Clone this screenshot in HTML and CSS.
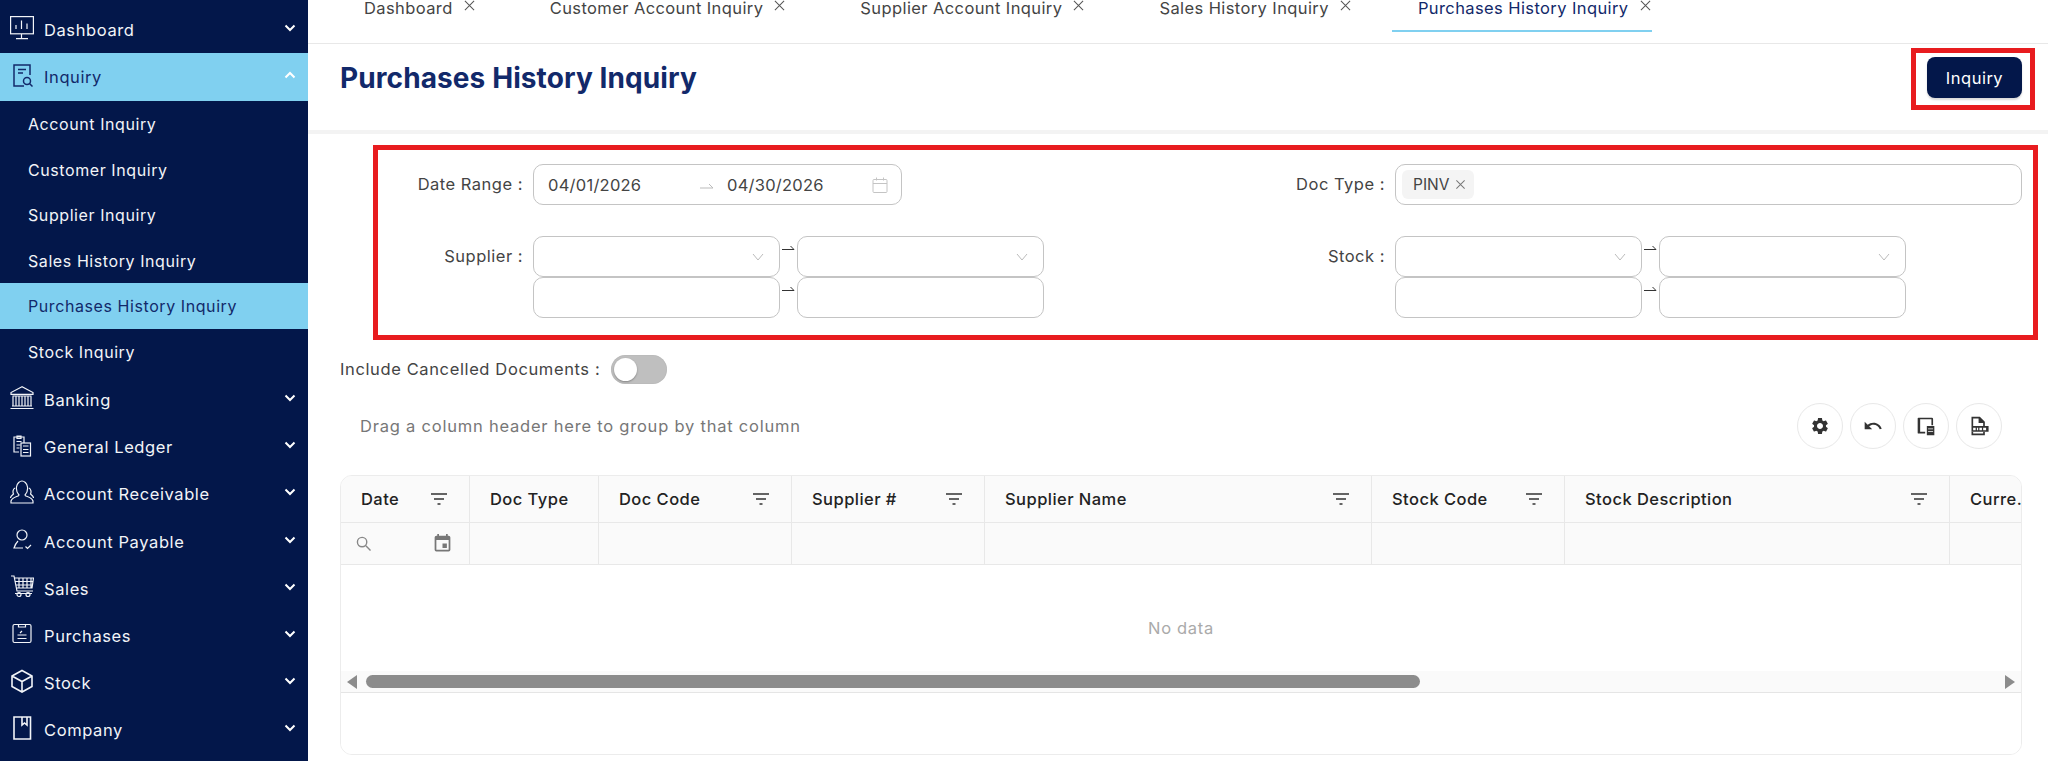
FILE: index.html
```html
<!DOCTYPE html>
<html lang="en">
<head>
<meta charset="utf-8">
<title>Purchases History Inquiry</title>
<link rel="stylesheet" href="styles.css">
</head>
<body>
<div class="app">
  <aside class="sidebar">
    <div class="nav-item top-item">
      <svg class="nav-icon" viewBox="0 0 24 24"><rect x="0.6" y="0.6" width="22.8" height="17.2"/><path d="M6 13V9M11.5 13V4.5M17 13V7.5M11.5 18v4M6 22.6h12"/></svg>
      <span>Dashboard</span>
      <svg class="chev" viewBox="0 0 12 8"><path d="M1.5 1.5 6 6l4.5-4.5"/></svg>
    </div>
    <div class="nav-item active">
      <svg class="nav-icon" viewBox="0 0 24 24"><path d="M20 12V2H4v21h10M8 6.5h8M8 10h5"/><circle cx="17" cy="18" r="3.5"/><path d="m19.500 20.500 3 3"/></svg>
      <span>Inquiry</span>
      <svg class="chev" viewBox="0 0 12 8"><path d="M1.500 6.500 6 2l4.500 4.500"/></svg>
    </div>
    <div class="sub-item">Account Inquiry</div>
    <div class="sub-item">Customer Inquiry</div>
    <div class="sub-item">Supplier Inquiry</div>
    <div class="sub-item">Sales History Inquiry</div>
    <div class="sub-item active">Purchases History Inquiry</div>
    <div class="sub-item">Stock Inquiry</div>
    <div class="nav-item first-after">
      <svg class="nav-icon" viewBox="0 0 24 24"><path d="M12 .8 1 6.500v1.800h22V6.500zM2.500 10h19M3 10.500v9M6 10.500v9M9 10.500v9M12 10.500v9M15 10.500v9M18 10.500v9M21 10.500v9M2 20h20M.5 22.500h23"/></svg>
      <span>Banking</span>
      <svg class="chev" viewBox="0 0 12 8"><path d="M1.500 1.500 6 6l4.500-4.500"/></svg>
    </div>
    <div class="nav-item">
      <svg class="nav-icon" viewBox="0 0 24 24"><path d="M9 19H4V4h10v6M7 3h4v2.500H7zM6.500 8.500h5M6.500 12h4M6.500 15h3"/><rect x="11" y="10" width="9.500" height="13"/><path d="M13 13h5.500M13 16.500h5.500M13 19.500h5.500"/></svg>
      <span>General Ledger</span>
      <svg class="chev" viewBox="0 0 12 8"><path d="M1.500 1.500 6 6l4.500-4.500"/></svg>
    </div>
    <div class="nav-item">
      <svg class="nav-icon" viewBox="0 0 24 24"><path d="M9 15c-2-2-3-4-2.500-8C7 3 10 1 12 1s5 2 5.500 6c.5 4-.5 6-2.500 8 0 2 6 1 8 6v2H1v-2c2-5 8-4 8-6zM5 8C3 9 2.500 12 3.500 14c-1 1-3 2-3 4M19 8c2 1 2.500 4 1.500 6 1 1 3 2 3 4"/></svg>
      <span>Account Receivable</span>
      <svg class="chev" viewBox="0 0 12 8"><path d="M1.500 1.500 6 6l4.500-4.500"/></svg>
    </div>
    <div class="nav-item">
      <svg class="nav-icon" viewBox="0 0 24 24"><circle cx="12" cy="8" r="5"/><path d="M8 14c-2 2-3 4-4 7h9M15.500 19.500l2 2 3.500-3.500"/></svg>
      <span>Account Payable</span>
      <svg class="chev" viewBox="0 0 12 8"><path d="M1.500 1.500 6 6l4.500-4.500"/></svg>
    </div>
    <div class="nav-item">
      <svg class="nav-icon" viewBox="0 0 24 24"><path d="M1 2h3l3 15h16M4.500 4H23.500L22 14H6.500M9 4v10M13 4v10M17 4v10M21 4v10M5.500 7.500h17.500M6 11h16.500M5 19.500h17"/><circle cx="9" cy="20.500" r="2"/><circle cx="18" cy="20.500" r="2"/></svg>
      <span>Sales</span>
      <svg class="chev" viewBox="0 0 12 8"><path d="M1.500 1.500 6 6l4.500-4.500"/></svg>
    </div>
    <div class="nav-item">
      <svg class="nav-icon" viewBox="0 0 24 24"><rect x="3" y="2.500" width="18" height="18" rx="1.500"/><path d="M8.500 2.500v2.500h7V2.500M7.500 16.500h9M7.500 13h9M10 11l2-2"/></svg>
      <span>Purchases</span>
      <svg class="chev" viewBox="0 0 12 8"><path d="M1.500 1.500 6 6l4.500-4.500"/></svg>
    </div>
    <div class="nav-item">
      <svg class="nav-icon thick" viewBox="0 0 24 24"><path d="M12 1.500 22 7v10.500L12 23 2 17.500V7zM2 7l10 5.500L22 7M12 12.500V23"/></svg>
      <span>Stock</span>
      <svg class="chev" viewBox="0 0 12 8"><path d="M1.500 1.500 6 6l4.500-4.500"/></svg>
    </div>
    <div class="nav-item">
      <svg class="nav-icon thick" viewBox="0 0 24 24"><path d="M4 1h16.500v22H4zM12 1v8l2.500-2 2.500 2V1"/></svg>
      <span>Company</span>
      <svg class="chev" viewBox="0 0 12 8"><path d="M1.500 1.500 6 6l4.500-4.500"/></svg>
    </div>
  </aside>

  <main class="main">
    <nav class="tabs">
      <div class="tab"><span>Dashboard</span><svg class="close" viewBox="0 0 12 12"><path d="m1 1 10 10M11 1 1 11"/></svg></div>
      <div class="tab"><span>Customer Account Inquiry</span><svg class="close" viewBox="0 0 12 12"><path d="m1 1 10 10M11 1 1 11"/></svg></div>
      <div class="tab"><span>Supplier Account Inquiry</span><svg class="close" viewBox="0 0 12 12"><path d="m1 1 10 10M11 1 1 11"/></svg></div>
      <div class="tab"><span>Sales History Inquiry</span><svg class="close" viewBox="0 0 12 12"><path d="m1 1 10 10M11 1 1 11"/></svg></div>
      <div class="tab active"><span>Purchases History Inquiry</span><svg class="close" viewBox="0 0 12 12"><path d="m1 1 10 10M11 1 1 11"/></svg></div>
    </nav>

    <header class="page-head">
      <h1 class="page-title">Purchases History Inquiry</h1>
      <div class="marked-action"><button class="primary-btn" type="button">Inquiry</button></div>
    </header>

    <section class="filters">
      <label class="f-label">Date Range :</label>
      <div class="field date-field">
        <span class="date-val">04/01/2026</span>
        <svg class="date-arrow" viewBox="0 0 14 6"><path d="M0 5h13L9 1"/></svg>
        <span class="date-val">04/30/2026</span>
        <svg class="cal" viewBox="0 0 16 16"><rect x="1" y="2.500" width="14" height="13" rx="1"/><path d="M1 6.500h14M4.500 .5v3M11.500 .5v3"/></svg>
      </div>
      <label class="f-label">Doc Type :</label>
      <div class="field tag-field">
        <span class="tag">PINV<svg class="tag-x" viewBox="0 0 12 12"><path d="m1.500 1.500 9 9M10.500 1.500l-9 9"/></svg></span>
      </div>

      <label class="f-label range-label">Supplier :</label>
      <div class="range">
        <div class="field select"><svg class="sel-chev" viewBox="0 0 12 8"><path d="M1 1l5 6 5-6"/></svg></div>
        <svg class="range-arrow" viewBox="0 0 13 6"><path d="M0 4.500h12L8.500 1"/></svg>
        <div class="field select"><svg class="sel-chev" viewBox="0 0 12 8"><path d="M1 1l5 6 5-6"/></svg></div>
        <div class="field"></div>
        <svg class="range-arrow" viewBox="0 0 13 6"><path d="M0 4.500h12L8.500 1"/></svg>
        <div class="field"></div>
      </div>
      <label class="f-label range-label">Stock :</label>
      <div class="range">
        <div class="field select"><svg class="sel-chev" viewBox="0 0 12 8"><path d="M1 1l5 6 5-6"/></svg></div>
        <svg class="range-arrow" viewBox="0 0 13 6"><path d="M0 4.500h12L8.500 1"/></svg>
        <div class="field select"><svg class="sel-chev" viewBox="0 0 12 8"><path d="M1 1l5 6 5-6"/></svg></div>
        <div class="field"></div>
        <svg class="range-arrow" viewBox="0 0 13 6"><path d="M0 4.500h12L8.500 1"/></svg>
        <div class="field"></div>
      </div>
    </section>

    <div class="include-row">
      <span class="include-label">Include Cancelled Documents :</span>
      <span class="switch"><span class="knob"></span></span>
    </div>

    <div class="toolbar">
      <span class="group-hint">Drag a column header here to group by that column</span>
      <div class="tool-btns">
        <button class="tool-btn" type="button" aria-label="Settings"><svg viewBox="0 0 24 24"><path d="M19.140 12.940c.04-.3.06-.61.06-.94 0-.32-.02-.64-.07-.94l2.030-1.580c.18-.14.23-.41.12-.61l-1.920-3.320c-.12-.22-.37-.29-.59-.22l-2.390.96c-.5-.38-1.030-.7-1.620-.94l-.36-2.540c-.04-.24-.24-.41-.48-.41h-3.840c-.24 0-.43.17-.47.41l-.36 2.540c-.59.24-1.130.57-1.620.94l-2.390-.96c-.22-.08-.47 0-.59.22L2.740 8.870c-.12.21-.08.47.12.61l2.030 1.580c-.05.3-.09.63-.09.94s.02.64.07.94l-2.030 1.580c-.18.14-.23.41-.12.61l1.920 3.320c.12.22.37.29.59.22l2.390-.96c.5.38 1.030.7 1.620.94l.36 2.540c.05.24.24.41.48.41h3.840c.24 0 .44-.17.47-.41l.36-2.540c.59-.24 1.130-.56 1.620-.94l2.390.96c.22.08.47 0 .59-.22l1.920-3.320c.12-.22.07-.47-.12-.61l-2.010-1.580zM12 15.600c-1.980 0-3.600-1.620-3.600-3.600s1.620-3.600 3.600-3.600 3.600 1.620 3.600 3.600-1.620 3.600-3.600 3.600z"/></svg></button>
        <button class="tool-btn" type="button" aria-label="Undo"><svg viewBox="0 0 24 24"><path d="M12.500 8c-2.650 0-5.050.99-6.900 2.600L2 7v9h9l-3.620-3.620c1.390-1.160 3.160-1.880 5.120-1.880 3.540 0 6.550 2.310 7.600 5.500l2.370-.78C21.080 11.030 17.150 8 12.500 8z"/></svg></button>
        <button class="tool-btn" type="button" aria-label="Save layout"><svg viewBox="0 0 24 24"><path d="M3 2h16a1.500 1.500 0 0 1 1.500 1.500V11h-2V4H5v15h6v2H3a1 1 0 0 1-1-1V3a1 1 0 0 1 1-1z"/><path d="M13 12h9v11h-9zM14.500 15v1h6v-1zM14.500 18v1h6v-1z" fill-rule="evenodd"/></svg></button>
        <button class="tool-btn" type="button" aria-label="Export XLSX"><svg viewBox="0 0 24 24"><path d="M3 1h10l6 6v5h-2V8.500h-5.500V3H5v9H3zM3 19h2v2h12v-2h2v4H3z"/><path d="M3 12h20.500v7H3zM5 14v3h3v-3zM9.500 14v3h1.500v-3zM12.500 14v3h3v-3zM17 14v3h3.500v-3z" fill-rule="evenodd"/></svg></button>
      </div>
    </div>

    <section class="grid-card">
      <div class="grid-cols grid-head">
        <div class="th"><span>Date</span><svg class="funnel" viewBox="0 0 16 12"><path d="M0 1h16M3 6h10M6.500 11h3"/></svg></div>
        <div class="th"><span>Doc Type</span></div>
        <div class="th"><span>Doc Code</span><svg class="funnel" viewBox="0 0 16 12"><path d="M0 1h16M3 6h10M6.500 11h3"/></svg></div>
        <div class="th"><span>Supplier #</span><svg class="funnel" viewBox="0 0 16 12"><path d="M0 1h16M3 6h10M6.500 11h3"/></svg></div>
        <div class="th"><span>Supplier Name</span><svg class="funnel" viewBox="0 0 16 12"><path d="M0 1h16M3 6h10M6.500 11h3"/></svg></div>
        <div class="th"><span>Stock Code</span><svg class="funnel" viewBox="0 0 16 12"><path d="M0 1h16M3 6h10M6.500 11h3"/></svg></div>
        <div class="th"><span>Stock Description</span><svg class="funnel" viewBox="0 0 16 12"><path d="M0 1h16M3 6h10M6.500 11h3"/></svg></div>
        <div class="th clipped"><span>Curre.</span></div>
      </div>
      <div class="grid-cols grid-filter">
        <div class="fc date-filter">
          <svg class="mag" viewBox="0 0 16 16"><circle cx="6.500" cy="6.500" r="5"/><path d="m10.500 10.500 5 5"/></svg>
          <svg class="event" viewBox="0 0 24 24"><path d="M17 12h-5v5h5v-5zM16 1v2H8V1H6v2H5a2 2 0 0 0-2 2v14a2 2 0 0 0 2 2h14a2 2 0 0 0 2-2V5a2 2 0 0 0-2-2h-1V1h-2zm3 18H5V8h14v11z"/></svg>
        </div>
        <div class="fc"></div><div class="fc"></div><div class="fc"></div><div class="fc"></div><div class="fc"></div><div class="fc"></div><div class="fc last"></div>
      </div>
      <div class="no-data">No data</div>
      <div class="hscroll">
        <svg class="sb-arrow" viewBox="0 0 10 14"><path d="M10 0v14L0 7z"/></svg>
        <div class="sb-track"><div class="sb-thumb"></div></div>
        <svg class="sb-arrow" viewBox="0 0 10 14"><path d="M0 0v14l10-7z"/></svg>
      </div>
      <div class="grid-foot"></div>
    </section>
  </main>
</div>
</body>
</html>
```

FILE: styles.css
```css
* { box-sizing: border-box; }
html, body { margin: 0; height: 100%; overflow: hidden; }
body { font-family: Inter, "Liberation Sans", sans-serif; font-size: 16.5px; color: #444; background: #fff; }
.app { display: flex; height: 761px; }

.sidebar { width: 308px; flex: none; background: #03174a; color: #f2f4f8; padding-top: 7px; overflow: hidden; letter-spacing: 0.6px; }
.nav-item { height: 47.2px; display: flex; align-items: center; padding: 0 12px 0 10px; }
.nav-item.top-item { height: 46px; }
.nav-item.active { height: 48px; background: #80d0f0; color: #12296a; }
.nav-item.first-after { margin-top: 2.500px; }
.nav-icon { width: 24px; height: 24px; margin: -5px 10px 0 0; flex: none; fill: none; stroke: currentColor; stroke-width: 1.200; }
.nav-icon.thick { stroke-width: 1.600; }
.nav-item.active .nav-icon { stroke-width: 1.500; }
.chev { width: 12px; height: 8px; margin: -4px 0 0 auto; fill: none; stroke: #fff; stroke-width: 2; }
.sub-item { height: 45.500px; line-height: 46px; padding-left: 28px; font-size: 16px; letter-spacing: 0.58px; }
.sub-item.active { background: #80d0f0; color: #12296a; }

.main { flex: 1; min-width: 0; display: flex; flex-direction: column; }

.tabs { height: 44px; flex: none; display: flex; gap: 46px; padding-left: 30px; border-bottom: 1px solid #e8e8e8; }
.tab { height: 35px; margin-top: -3px; padding: 0 3px 0 26px; display: flex; align-items: flex-start; gap: 11px; line-height: 22px; letter-spacing: 0.4px; color: #444; }
.tab.active { margin-left: -8px; padding-right: 1px; color: #12296a; border-bottom: 2px solid #80d0f0; }
.close { width: 11px; height: 11px; margin-top: 3px; fill: none; stroke: #555; stroke-width: 1.100; }

.page-head { height: 90px; flex: none; display: flex; justify-content: space-between; align-items: flex-start; padding: 4px 13px 0 32px; border-bottom: 4px solid #f3f3f3; }
.page-title { margin: 11px 0 0; font-size: 28px; line-height: 38px; font-weight: 700; letter-spacing: 0.1px; color: #12296a; }
.marked-action { width: 124px; height: 62px; border: 5px solid #e81c1f; padding: 4px 11px 0; }
.primary-btn { width: 95px; height: 41px; border: 0; border-radius: 8px; background: #03174a; color: #fff; font: inherit; letter-spacing: 0.5px; box-shadow: 0 2px 2px rgba(0,0,0,.15); }

.filters { margin: 11px 10px 0 65px; width: 1665px; height: 195px; border: 5px solid #e81c1f; padding: 14px 0 0; display: grid; grid-template-columns: 145px 512px 330px 627px; grid-template-rows: 41px 82px; column-gap: 10px; row-gap: 31px; }
.f-label { text-align: right; line-height: 41px; color: #444; white-space: nowrap; letter-spacing: 0.5px; }
.field { height: 41px; background: #fff; border: 1px solid #c4c4c4; border-radius: 10px; display: flex; align-items: center; }
.date-field { width: 369px; padding: 0 13px 0 14px; letter-spacing: 0.25px; }
.date-val { width: 112px; }
.date-val + .date-arrow + .date-val { width: 134px; }
.date-arrow { width: 14px; height: 6px; margin: 3px 13px 0 0; fill: none; stroke: #bbb; stroke-width: 1; }
.date-val:first-child { width: 152px; }
.cal { width: 16px; height: 16px; margin-left: auto; fill: none; stroke: #c4c4c4; stroke-width: 1; }
.tag-field { padding-left: 6px; }
.tag { height: 29px; width: 72px; padding-left: 11px; display: flex; align-items: center; gap: 6px; background: #f4f4f4; border-radius: 6px; font-size: 15.500px; }
.tag-x { width: 11px; height: 11px; fill: none; stroke: #777; stroke-width: 1.100; }
.range { display: grid; grid-template-columns: 247px 17px 247px; grid-template-rows: 41px 41px; }
.range-arrow { width: 13px; height: 6px; margin: 9px 0 0 2px; fill: none; stroke: #333; stroke-width: 1; }
.select { justify-content: flex-end; padding-right: 15px; }
.sel-chev { width: 12px; height: 8px; fill: none; stroke: #bbb; stroke-width: 1; }

.include-row { display: flex; align-items: center; gap: 11px; height: 29px; margin: 15px 0 0 32px; letter-spacing: 0.62px; }
.include-label { margin-top: -2px; }
.switch { width: 56px; height: 29px; border-radius: 15px; background: #bfbfbf; padding: 3px; box-shadow: inset 0 0 1px rgba(0,0,0,.2); }
.knob { display: block; width: 23px; height: 23px; border-radius: 50%; background: #fff; box-shadow: 0 1px 2px rgba(0,0,0,.3); }

.toolbar { display: flex; justify-content: space-between; align-items: center; height: 46px; margin-top: 19px; padding: 0 46px 0 52px; }
.group-hint { color: #777; letter-spacing: 0.78px; }
.tool-btns { display: flex; gap: 7px; }
.tool-btn { width: 46px; height: 46px; padding: 0; display: flex; align-items: center; justify-content: center; border: 1px solid #e8e8e8; border-radius: 50%; background: #fff; }
.tool-btn svg { width: 20px; height: 20px; fill: #333; }

.grid-card { margin: 26px 26px 0 32px; height: 280px; border: 1px solid #ececec; border-radius: 12px; overflow: hidden; display: flex; flex-direction: column; }
.grid-cols { display: grid; grid-template-columns: 129px 129px 193px 193px 387px 193px 385px 1fr; flex: none; background: #fafafa; border-bottom: 1px solid #e8e8e8; }
.grid-head { height: 47px; }
.grid-filter { height: 42px; }
.th { display: flex; align-items: center; justify-content: space-between; padding: 0 22px 0 20px; border-right: 1px solid #e8e8e8; font-weight: 500; color: #222; white-space: nowrap; overflow: hidden; letter-spacing: 0.45px; }
.th.clipped { border-right: 0; padding-right: 0; }
.funnel { width: 16px; height: 12px; flex: none; fill: none; stroke: #333; stroke-width: 1.500; }
.fc { border-right: 1px solid #e8e8e8; }
.fc.last { border-right: 0; }
.date-filter { display: flex; align-items: center; justify-content: space-between; padding: 0 16px 0 15px; }
.mag { width: 15px; height: 15px; fill: none; stroke: #888; stroke-width: 1.500; }
.event { width: 21px; height: 21px; fill: #777; }
.no-data { flex: 1; padding-top: 20px; display: flex; align-items: center; justify-content: center; color: #aaa; letter-spacing: 0.7px; }
.hscroll { height: 22px; flex: none; display: flex; align-items: center; gap: 9px; padding: 0 6px; background: #fafafa; border-bottom: 1px solid #e5e5e5; }
.sb-arrow { width: 10px; height: 14px; flex: none; fill: #8c8c8c; }
.sb-track { flex: 1; height: 13px; }
.sb-thumb { width: 1054px; height: 13px; border-radius: 7px; background: #8c8c8c; }
.grid-foot { height: 61px; flex: none; background: #fff; }
```
